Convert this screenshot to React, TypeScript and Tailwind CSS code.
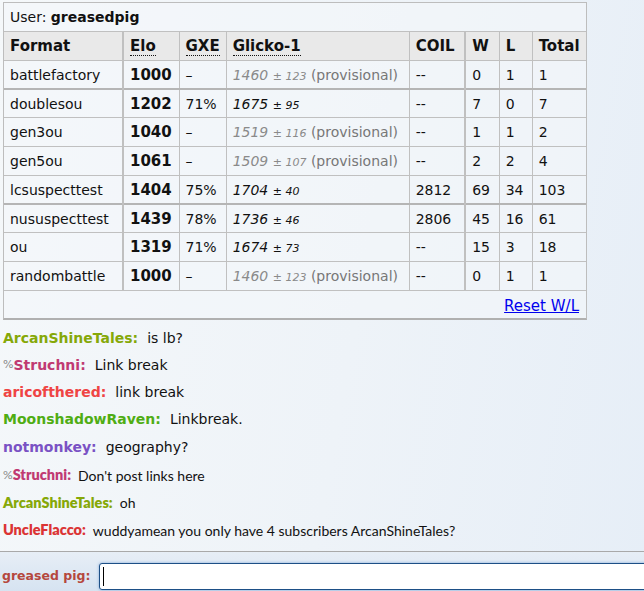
import React from "react";

type Row = {
  f: string;
  elo: string;
  gxe: string;
  g: string;
  pm: string;
  prov: boolean;
  coil: string;
  w: string;
  l: string;
  t: string;
  thick?: boolean;
};

const rows: Row[] = [
  { f: "battlefactory", elo: "1000", gxe: "–", g: "1460", pm: "123", prov: true, coil: "--", w: "0", l: "1", t: "1" },
  { f: "doublesou", elo: "1202", gxe: "71%", g: "1675", pm: "95", prov: false, coil: "--", w: "7", l: "0", t: "7", thick: true },
  { f: "gen3ou", elo: "1040", gxe: "–", g: "1519", pm: "116", prov: true, coil: "--", w: "1", l: "1", t: "2" },
  { f: "gen5ou", elo: "1061", gxe: "–", g: "1509", pm: "107", prov: true, coil: "--", w: "2", l: "2", t: "4" },
  { f: "lcsuspecttest", elo: "1404", gxe: "75%", g: "1704", pm: "40", prov: false, coil: "2812", w: "69", l: "34", t: "103" },
  { f: "nususpecttest", elo: "1439", gxe: "78%", g: "1736", pm: "46", prov: false, coil: "2806", w: "45", l: "16", t: "61", thick: true },
  { f: "ou", elo: "1319", gxe: "71%", g: "1674", pm: "73", prov: false, coil: "--", w: "15", l: "3", t: "18" },
  { f: "randombattle", elo: "1000", gxe: "–", g: "1460", pm: "123", prov: true, coil: "--", w: "0", l: "1", t: "1" },
];

const chat: { pre?: string; name: string; color: string; msg: string; narrow?: boolean; h: string }[] = [
  { name: "ArcanShineTales", color: "text-[#86a808]", msg: "is lb?", h: "h-[27px]" },
  { pre: "%", name: "Struchni", color: "text-[#c03a72]", msg: "Link break", h: "h-[27px]" },
  { name: "aricofthered", color: "text-[#ef4444]", msg: "link break", h: "h-[27px]" },
  { name: "MoonshadowRaven", color: "text-[#4fad13]", msg: "Linkbreak.", h: "h-[27px]" },
  { name: "notmonkey", color: "text-[#7a52c4]", msg: "geography?", h: "h-[28px]" },
  { pre: "%", name: "Struchni", color: "text-[#c03a72]", msg: "Don't post links here", narrow: true, h: "h-[28px]" },
  { name: "ArcanShineTales", color: "text-[#86a808]", msg: "oh", narrow: true, h: "h-[27px]" },
  { name: "UncleFlacco", color: "text-[#db3434]", msg: "wuddyamean you only have 4 subscribers ArcanShineTales?", narrow: true, h: "h-[28px]" },
];

const td = "border border-[#c0c0c0] px-[6px] pt-[2px] pb-0 align-middle";
const thickTop = "border-t-2 border-t-[#b5b5b5]";

export default function App() {
  return (
    <div
      className="w-[644px] h-[591px] overflow-hidden relative bg-[linear-gradient(100deg,#f5f8fa_0%,#eef3f8_55%,#e6eef7_100%)] text-[#111] text-[14px]"
      style={{ fontFamily: '"DejaVu Sans", Verdana, sans-serif' }}
    >
      <div className="pt-[2px] pl-[3px]">
        <div className="w-[584px] border border-[#bdbdbd] border-b-2 border-b-[#b0b0b0] bg-[#f4f7fa]/60">
          <table className="w-full border-collapse">
            <tbody>
              <tr>
                <td colSpan={9} className="px-[6px] pt-[2px] h-[28px] border-b border-[#c0c0c0]">
                  User: <b>greasedpig</b>
                </td>
              </tr>
              <tr className="bg-[#e9e9e9] font-bold text-left text-[15px]">
                <td className={`${td} h-[29px] border-l-0 w-[119px] border-r-2`}>Format</td>
                <td className={`${td} w-[56px]`}>
                  <span className="border-b border-dotted border-[#111]">Elo</span>
                </td>
                <td className={`${td} w-[46px]`}>
                  <span className="border-b border-dotted border-[#111]">GXE</span>
                </td>
                <td className={`${td} w-[183px]`}>
                  <span className="border-b border-dotted border-[#111]">Glicko-1</span>
                </td>
                <td className={`${td} w-[56px] border-r-2`}>COIL</td>
                <td className={`${td} w-[34px]`}>W</td>
                <td className={`${td} w-[33px]`}>L</td>
                <td className={`${td} border-r-0`}>Total</td>
              </tr>
              {rows.map((r, i) => {
                const t = r.thick ? thickTop : "";
                return (
                  <tr key={i} className={r.thick ? "h-[28px]" : "h-[29px]"}>
                    <td className={`${td} border-l-0 border-r-2 ${t}`}>{r.f}</td>
                    <td className={`${td} font-bold text-[15px] ${t}`}>{r.elo}</td>
                    <td className={`${td} ${t}`}>{r.gxe}</td>
                    <td className={`${td} whitespace-nowrap ${t}`}>
                      <span className={r.prov ? "text-[#8a8a8a]" : ""}>
                        <em>{r.g}</em> <span className="text-[11px]">± <em>{r.pm}</em></span>
                        {r.prov && <span className="text-[#777]"> (provisional)</span>}
                      </span>
                    </td>
                    <td className={`${td} border-r-2 ${t}`}>{r.coil}</td>
                    <td className={`${td} ${t}`}>{r.w}</td>
                    <td className={`${td} ${t}`}>{r.l}</td>
                    <td className={`${td} border-r-0 ${t}`}>{r.t}</td>
                  </tr>
                );
              })}
              <tr>
                <td colSpan={9} className="h-[28px] px-[7px] text-right align-middle pt-[3px]">
                  <a className="text-[#0000ee] underline text-[15px]" href="#">Reset W/L</a>
                </td>
              </tr>
            </tbody>
          </table>
        </div>
      </div>

      <div className="pl-[3px] pt-[5px]">
        {chat.map((c, i) => (
          <div
            key={i}
            className={`${c.h} flex items-center whitespace-nowrap text-[14px]`}
            style={c.narrow ? { fontFamily: 'Lato, "Liberation Sans", sans-serif' } : undefined}
          >
            {c.pre && <span className={`text-[#888] ${c.narrow ? "text-[12px]" : "text-[11px]"}`}>{c.pre}</span>}
            <b className={`${c.color} ${c.narrow ? "text-[14.5px] font-extrabold" : ""}`}>{c.name}:</b>
            <span className={c.narrow ? "ml-[7px]" : "ml-[9px]"}>{c.msg}</span>
          </div>
        ))}
      </div>

      <div className="absolute left-0 right-0 top-[551px] bottom-0 border-t border-[#a9a9a9] bg-[linear-gradient(180deg,#e7eef6_0%,#d6e3f1_100%)] flex items-start pt-[11px]">
        <span className="ml-[2px] mt-[4px] font-bold text-[12.5px] text-[#b5473d] whitespace-nowrap">greased pig:</span>
        <div className="ml-[9px] h-[27px] flex-1 -mr-[10px] bg-white border border-[#1d4f86] rounded-[3px] shadow-[0_0_3px_#7fa6d6] flex items-center pl-[3px]">
          <div className="w-px h-[19px] bg-black" />
        </div>
      </div>
    </div>
  );
}
